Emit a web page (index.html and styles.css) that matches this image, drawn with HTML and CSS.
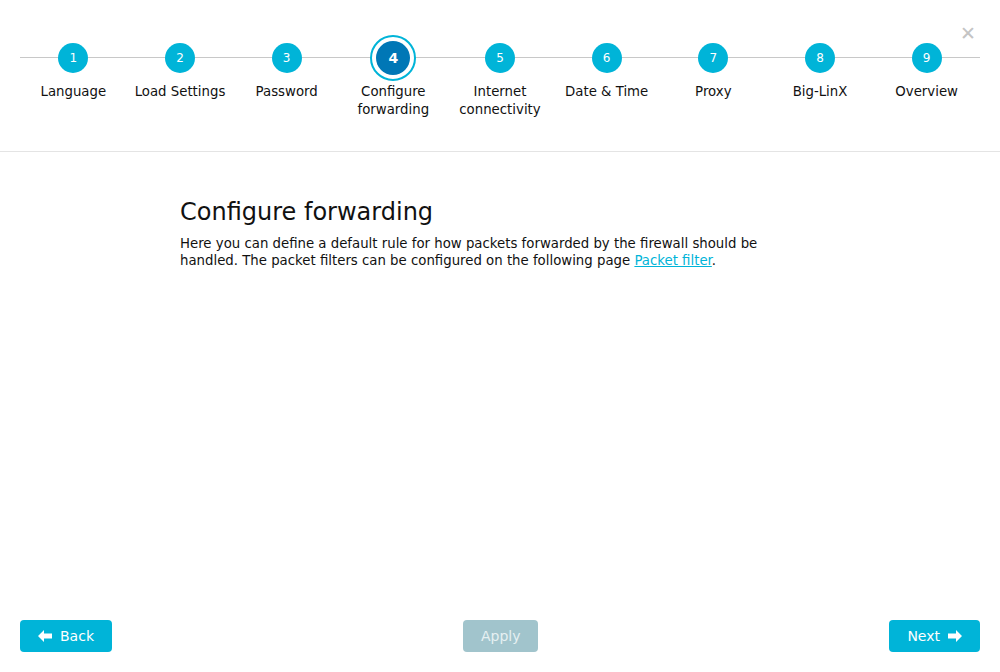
FILE: index.html
```html
<!DOCTYPE html>
<html>
<head>
<meta charset="utf-8">
<link rel="stylesheet" href="styles.css">
</head>
<body>
<div class="page">
  <header class="header">
    <button class="close" aria-label="Close">&#x2715;</button>
    <ol class="stepper">
      <li class="step"><span class="dot">1</span><span class="label">Language</span></li>
      <li class="step"><span class="dot">2</span><span class="label">Load Settings</span></li>
      <li class="step"><span class="dot">3</span><span class="label">Password</span></li>
      <li class="step active"><span class="dot"><span class="inner">4</span></span><span class="label">Configure<br>forwarding</span></li>
      <li class="step"><span class="dot">5</span><span class="label">Internet<br>connectivity</span></li>
      <li class="step"><span class="dot">6</span><span class="label">Date &amp; Time</span></li>
      <li class="step"><span class="dot">7</span><span class="label">Proxy</span></li>
      <li class="step"><span class="dot">8</span><span class="label">Big-LinX</span></li>
      <li class="step"><span class="dot">9</span><span class="label">Overview</span></li>
    </ol>
  </header>
  <main class="content">
    <h1 class="title">Configure forwarding</h1>
    <p class="desc">Here you can define a default rule for how packets forwarded by the firewall should be handled. The packet filters can be configured on the following page <a href="#" class="link">Packet filter</a>.</p>
  </main>
  <footer class="footer">
    <button class="btn"><svg class="arrow" width="14" height="12" viewBox="0 0 14 12"><path d="M0 6 L6 0 L6 3.5 L14 3.5 L14 8.5 L6 8.5 L6 12 Z" fill="#fff"/></svg>Back</button>
    <button class="btn disabled">Apply</button>
    <button class="btn">Next<svg class="arrow right" width="14" height="12" viewBox="0 0 14 12"><path d="M14 6 L8 0 L8 3.5 L0 3.5 L0 8.5 L8 8.5 L8 12 Z" fill="#fff"/></svg></button>
  </footer>
</div>
</body>
</html>
```

FILE: styles.css
```css
* { box-sizing: border-box; }
html, body { margin: 0; padding: 0; background: #fff; }
body {
  font-family: "DejaVu Sans", "Liberation Sans", sans-serif;
  color: #111;
  font-size: 13.3px;
}
.page {
  height: 672px;
  display: flex;
  flex-direction: column;
}
.header {
  position: relative;
  height: 152px;
  border-bottom: 1px solid #e4e4e4;
  padding: 35px 20px 0;
}
.close {
  position: absolute;
  top: 22px;
  right: 24px;
  border: 0;
  background: none;
  color: #c4c4c4;
  font-size: 19px;
  font-weight: bold;
  padding: 0;
  cursor: pointer;
  font-family: "DejaVu Sans", sans-serif;
}
.stepper {
  list-style: none;
  margin: 0;
  padding: 0;
  display: grid;
  grid-template-columns: repeat(9, 1fr);
  position: relative;
}
.stepper::before {
  content: "";
  position: absolute;
  left: 0;
  right: 0;
  top: 22px;
  height: 1px;
  background: #c8c8c8;
}
.step {
  display: flex;
  flex-direction: column;
  align-items: center;
  position: relative;
}
.dot {
  width: 30px;
  height: 30px;
  margin-top: 8px;
  border-radius: 50%;
  background: #00b4d8;
  color: #fff;
  font-size: 12px;
  display: flex;
  align-items: center;
  justify-content: center;
}
.step.active .dot {
  width: 46px;
  height: 46px;
  margin-top: 0;
  margin-bottom: -8px;
  background: #fff;
  border: 2px solid #00b4d8;
  padding: 4px;
}
.inner {
  width: 34px;
  height: 34px;
  border-radius: 50%;
  background: #0077b6;
  color: #fff;
  font-weight: bold;
  font-size: 14px;
  display: flex;
  align-items: center;
  justify-content: center;
}
.label {
  margin-top: 10px;
  font-size: 13.3px;
  line-height: 18px;
  text-align: center;
  color: #111;
}
.content {
  width: 640px;
  margin: 0 auto;
  padding-top: 44px;
  flex: 1;
}
.title {
  font-size: 24px;
  font-weight: normal;
  margin: 0 0 7px;
  line-height: 32px;
}
.desc {
  margin: 0;
  font-size: 13.3px;
  line-height: 17px;
  padding-right: 40px;
}
.link { color: #00b4d8; }
.footer {
  display: flex;
  justify-content: space-between;
  padding: 0 20px 20px;
}
.btn {
  height: 32px;
  border: 0;
  border-radius: 4px;
  background: #00b4d8;
  color: #fff;
  font-family: "DejaVu Sans", sans-serif;
  font-size: 14px;
  padding: 0 18px;
  display: flex;
  align-items: center;
  gap: 8px;
}
.btn.disabled { background: #a1c4cc; color: #e6f0f2; }
```
